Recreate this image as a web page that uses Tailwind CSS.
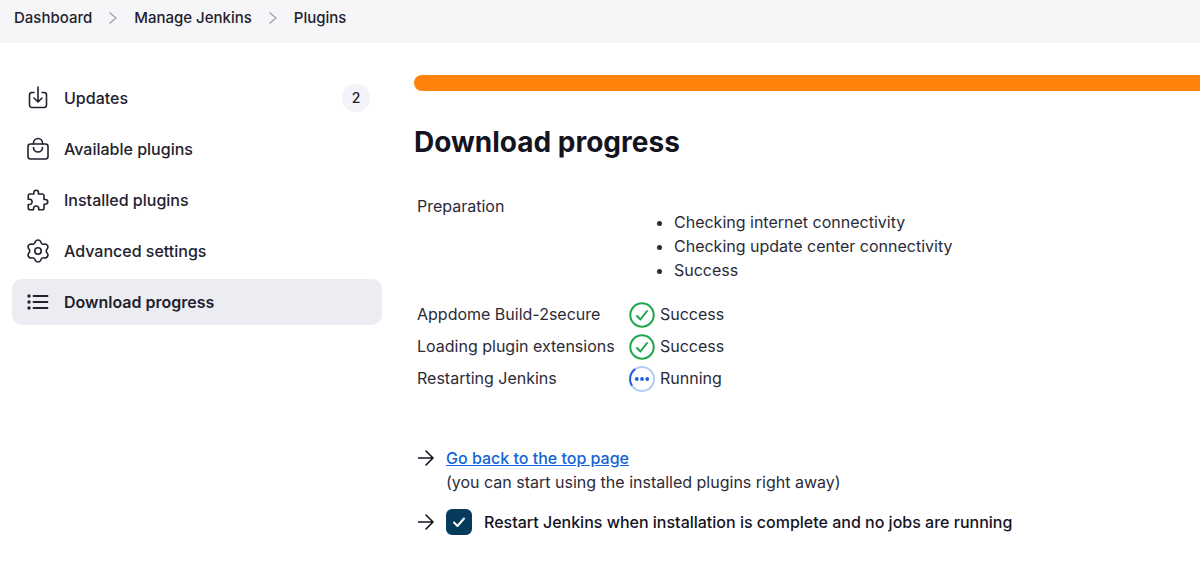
<!DOCTYPE html>
<html lang="en">
<head>
    <meta charset="UTF-8">
    <meta name="viewport" content="width=device-width, initial-scale=1.0">
    <title>Download progress - Plugins [Jenkins]</title>
    <script src="https://cdn.jsdelivr.net/npm/@tailwindcss/browser@4"></script>
</head>
<body class="bg-white font-['Inter',sans-serif] text-base text-[#2b2b38]">
    <!-- Breadcrumbs -->
    <nav aria-label="Breadcrumb" class="bg-[#f6f6f9] px-3.5 pt-1.5 pb-[13px]">
        <ol class="flex items-center gap-[17px] text-[15px] leading-6 font-medium text-[#22222e]">
            <li><a href="#">Dashboard</a></li>
            <li aria-hidden="true">
                <svg class="w-2 h-3" viewBox="0 0 8 12" fill="none" stroke="#a3a3b8" stroke-width="1.5" stroke-linecap="round" stroke-linejoin="round"><path d="M1 1l6 5-6 5"/></svg>
            </li>
            <li><a href="#">Manage Jenkins</a></li>
            <li aria-hidden="true">
                <svg class="w-2 h-3" viewBox="0 0 8 12" fill="none" stroke="#a3a3b8" stroke-width="1.5" stroke-linecap="round" stroke-linejoin="round"><path d="M1 1l6 5-6 5"/></svg>
            </li>
            <li><a href="#">Plugins</a></li>
        </ol>
    </nav>

    <div class="flex gap-8 pl-3 pt-8">
        <!-- Side panel -->
        <aside class="w-[370px] shrink-0">
            <nav aria-label="Plugins" class="flex flex-col gap-[5px] font-medium text-[#22222e]">
                <a href="#" class="flex items-center gap-3.5 h-[46px] pl-3.5 pr-3 rounded-[10px]">
                    <svg class="size-6" viewBox="0 0 24 24" fill="none" stroke="currentColor" stroke-width="1.6" stroke-linecap="round" stroke-linejoin="round"><path d="M8 6.5H6A2.500 2.500 0 0 0 3.500 9v10A2.500 2.500 0 0 0 6 21.500h12a2.500 2.500 0 0 0 2.500-2.500V9A2.500 2.500 0 0 0 18 6.500h-2M12 1v14.500M8 12l4 4 4-4"/></svg>
                    <span class="grow">Updates</span>
                    <span class="flex items-center justify-center size-7 rounded-full bg-[#f3f3f9] text-sm">2</span>
                </a>
                <a href="#" class="flex items-center gap-3.5 h-[46px] pl-3.5 pr-3 rounded-[10px]">
                    <svg class="size-6" viewBox="0 0 24 24" fill="none" stroke="currentColor" stroke-width="1.6" stroke-linecap="round" stroke-linejoin="round"><rect x="2" y="7" width="20" height="15" rx="2.500"/><path d="M7.500 7V6a4.500 4.500 0 0 1 9 0v1M7.500 10.500a4.500 4.500 0 0 0 9 0"/></svg>
                    <span>Available plugins</span>
                </a>
                <a href="#" class="flex items-center gap-3.5 h-[46px] pl-3.5 pr-3 rounded-[10px]">
                    <svg class="size-6" viewBox="0 0 512 512" fill="none" stroke="currentColor" stroke-width="34" stroke-linecap="round" stroke-linejoin="round"><path d="M413.66,246.1H386a2,2,0,0,1-2-2V166.95A38.94,38.94,0,0,0,345.05,128H267.9a2,2,0,0,1-2-2V98.34c0-27.14-21.5-49.86-48.64-50.33a49.53,49.53,0,0,0-50.4,49.51V126a2,2,0,0,1-2,2H87.62A39.74,39.74,0,0,0,48,167.62V238a2,2,0,0,0,2,2H76.91c29.37,0,53.68,25.48,54.09,54.85.42,29.87-23.51,57.15-53.29,57.15H50a2,2,0,0,0-2,2v70.38A39.74,39.74,0,0,0,87.62,464H158a2,2,0,0,0,2-2V441.07c0-30.28,24.75-56.35,55-57.06,30.1-.7,57,20.31,57,50.28V462a2,2,0,0,0,2,2h71.14A38.86,38.86,0,0,0,384,425.14v-78a2,2,0,0,1,2-2h28.48c27.63,0,49.52-22.67,49.52-50.4S440.8,246.57,413.66,246.1Z"/></svg>
                    <span>Installed plugins</span>
                </a>
                <a href="#" class="flex items-center gap-3.5 h-[46px] pl-3.5 pr-3 rounded-[10px]">
                    <svg class="size-6" viewBox="0 0 24 24" fill="none" stroke="currentColor" stroke-width="1.6" stroke-linejoin="round"><path d="M9.330 2.680A3 3 0 0 1 14.670 2.680A3 3 0 0 0 18.740 5.020A3 3 0 0 1 21.410 9.650A3 3 0 0 0 21.410 14.350A3 3 0 0 1 18.740 18.980A3 3 0 0 0 14.670 21.320A3 3 0 0 1 9.330 21.320A3 3 0 0 0 5.260 18.980A3 3 0 0 1 2.590 14.350A3 3 0 0 0 2.590 9.650A3 3 0 0 1 5.260 5.020A3 3 0 0 0 9.330 2.680Z"/><circle cx="12" cy="12" r="3.200"/></svg>
                    <span>Advanced settings</span>
                </a>
                <a href="#" aria-current="page" class="flex items-center gap-3.5 h-[46px] pl-3.5 pr-3 rounded-[10px] bg-[#ecedf3] font-semibold">
                    <svg class="size-6" viewBox="0 0 24 24" fill="none" stroke="currentColor" stroke-width="1.8" stroke-linecap="round"><path d="M7.500 6H21.500M7.500 12H21.500M7.500 18H21.500"/><path stroke-width="3.400" d="M3 6h0M3 12h0M3 18h0"/></svg>
                    <span>Download progress</span>
                </a>
            </nav>
        </aside>

        <!-- Main panel -->
        <main class="grow">
            <div role="progressbar" aria-label="Restarting" class="h-4 rounded-l-lg bg-[#ff820d]"></div>
            <h1 class="mt-[33px] text-[28px] leading-9 font-bold text-[#14141f]">Download progress</h1>

            <table class="mt-[34px]">
                <tbody>
                    <tr>
                        <td class="w-[214px] pl-[3px] align-top leading-6">Preparation</td>
                        <td>
                            <ul class="list-disc pl-[46px] py-4 leading-6">
                                <li>Checking internet connectivity</li>
                                <li>Checking update center connectivity</li>
                                <li>Success</li>
                            </ul>
                        </td>
                    </tr>
                    <tr class="h-8">
                        <td class="pl-[3px]">Appdome Build-2secure</td>
                        <td>
                            <div class="flex items-center gap-1">
                                <svg class="size-7" viewBox="0 0 28 28" fill="none" stroke="#1ea64b" stroke-width="2" stroke-linecap="round" stroke-linejoin="round"><circle cx="14" cy="15" r="11.700"/><path d="M9 16l3.500 3.500L19 11"/></svg>
                                Success
                            </div>
                        </td>
                    </tr>
                    <tr class="h-8">
                        <td class="pl-[3px]">Loading plugin extensions</td>
                        <td>
                            <div class="flex items-center gap-1">
                                <svg class="size-7" viewBox="0 0 28 28" fill="none" stroke="#1ea64b" stroke-width="2" stroke-linecap="round" stroke-linejoin="round"><circle cx="14" cy="15" r="11.700"/><path d="M9 16l3.500 3.500L19 11"/></svg>
                                Success
                            </div>
                        </td>
                    </tr>
                    <tr class="h-8">
                        <td class="pl-[3px]">Restarting Jenkins</td>
                        <td>
                            <div class="flex items-center gap-1">
                                <svg class="size-7" viewBox="0 0 28 28" fill="none" stroke="#2260e0" stroke-width="2" stroke-linecap="round"><circle cx="14" cy="15" r="12" stroke="#b4ccf8"/><path d="M3.600 21A12 12 0 0 1 6.700 5.500"/><path stroke-width="3.800" d="M8.800 15h0M14 15h0M19.200 15h0"/></svg>
                                Running
                            </div>
                        </td>
                    </tr>
                </tbody>
            </table>

            <div class="mt-[52px] pl-1">
                <div class="flex gap-3">
                    <svg class="w-4 h-6" viewBox="0 0 16 24" fill="none" stroke="#14141f" stroke-width="1.600" stroke-linecap="round" stroke-linejoin="round"><path d="M0 12h15M8 5l7 7-7 7"/></svg>
                    <div class="leading-6">
                        <a href="#" class="font-medium text-[#1264d6] underline">Go back to the top page</a>
                        <p>(you can start using the installed plugins right away)</p>
                    </div>
                </div>
                <div class="mt-[15px] flex items-center gap-3">
                    <svg class="w-4 h-6" viewBox="0 0 16 24" fill="none" stroke="#14141f" stroke-width="1.600" stroke-linecap="round" stroke-linejoin="round"><path d="M0 12h15M8 5l7 7-7 7"/></svg>
                    <div class="grid items-center">
                        <input type="checkbox" id="restart" checked class="peer col-start-1 row-start-1 size-[26px] appearance-none rounded-md border-2 border-[#073b5c] checked:bg-[#073b5c]">
                        <svg class="pointer-events-none col-start-1 row-start-1 size-[26px] opacity-0 peer-checked:opacity-100" viewBox="0 0 26 26" fill="none" stroke="#fff" stroke-width="2" stroke-linecap="round" stroke-linejoin="round"><path d="M8 13.500l3.500 3.500L18 9.500"/></svg>
                    </div>
                    <label for="restart" class="font-medium text-[#14141f]">Restart Jenkins when installation is complete and no jobs are running</label>
                </div>
            </div>
        </main>
    </div>
</body>
</html>
